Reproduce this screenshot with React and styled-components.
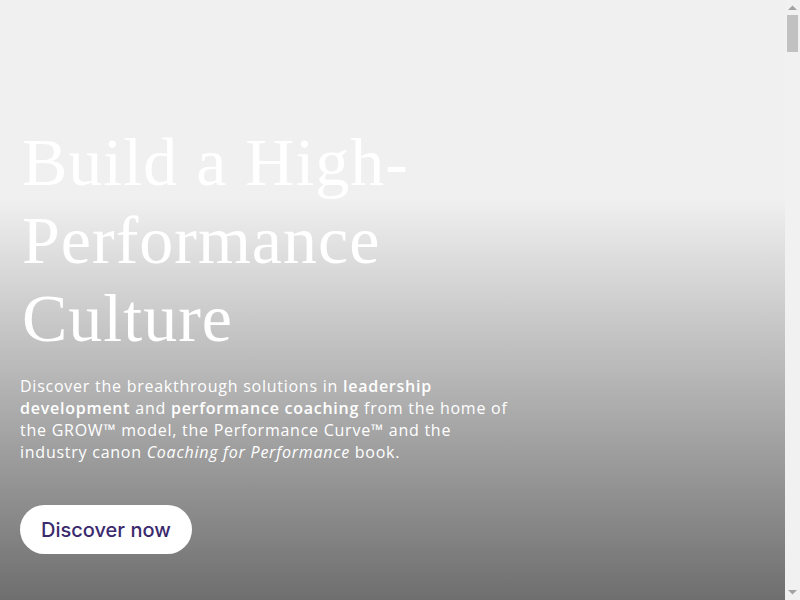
import React from 'react';
import styled, { createGlobalStyle } from 'styled-components';

const GlobalStyle = createGlobalStyle`
  html, body {
    margin: 0;
    padding: 0;
    background-color: #f0f0f0;
    overflow: hidden;
  }
  * {
    box-sizing: border-box;
  }
`;

const Frame = styled.div`
  display: flex;
  width: 800px;
  height: 600px;
  overflow: hidden;
`;

const Viewport = styled.div`
  flex: 1;
  height: 600px;
  overflow: hidden;
`;

const Hero = styled.section`
  height: 600px;
  background-color: #f0f0f0;
  background-image: linear-gradient(
    to bottom,
    rgba(0, 0, 0, 0) 33%,
    rgba(0, 0, 0, 0.54) 100%
  );
  display: flex;
  flex-direction: column;
  padding: 123px 20px 0;
`;

const Title = styled.h1`
  margin: 0;
  font-family: 'Liberation Serif', 'DejaVu Serif', serif;
  font-weight: 400;
  font-size: 68px;
  line-height: 78px;
  letter-spacing: 1px;
  color: #ffffff;
  max-width: 430px;
  padding-left: 2px;
`;

const Lead = styled.p`
  margin: 18px 0 0;
  max-width: 495px;
  font-family: 'Open Sans', 'Liberation Sans', sans-serif;
  font-size: 16px;
  line-height: 22px;
  letter-spacing: 0.75px;
  color: #ffffff;

  strong {
    font-weight: 600;
  }
`;

const CtaButton = styled.button`
  align-self: flex-start;
  margin-top: 42px;
  height: 49px;
  padding: 0 21px;
  border: none;
  border-radius: 25px;
  background: #ffffff;
  color: #3b2a6d;
  font-family: 'Inter', 'Liberation Sans', sans-serif;
  font-size: 20px;
  font-weight: 500;
  cursor: pointer;
`;

/* drawn scrollbar, the page below the hero is long */
const ScrollTrack = styled.div`
  width: 15px;
  height: 600px;
  background: #f1f1f1;
  display: flex;
  flex-direction: column;
  align-items: center;
`;

const Arrow = styled.div`
  height: 15px;
  width: 15px;
  display: flex;
  align-items: center;
  justify-content: center;
`;

const Thumb = styled.div`
  width: 11px;
  height: 37px;
  margin-left: 2px;
  align-self: flex-start;
  background: #c1c1c1;
`;

const Gap = styled.div`
  flex: 1;
`;

function ArrowGlyph({ down }) {
  return (
    <svg width="9" height="5" viewBox="0 0 9 5">
      <polygon
        points={down ? '0,0 9,0 4.5,4.5' : '0,5 9,5 4.5,0.5'}
        fill="#a3a3a3"
      />
    </svg>
  );
}

export default function App() {
  return (
    <>
      <GlobalStyle />
      <Frame>
        <Viewport>
          <Hero>
            <Title>Build a High-Performance Culture</Title>
            <Lead>
              Discover the breakthrough solutions in <strong>leadership development</strong> and{' '}
              <strong>performance coaching</strong> from the home of the GROW™ model, the
              Performance Curve™ and the industry canon <em>Coaching for Performance</em> book.
            </Lead>
            <CtaButton>Discover now</CtaButton>
          </Hero>
        </Viewport>
        <ScrollTrack>
          <Arrow>
            <ArrowGlyph />
          </Arrow>
          <Thumb />
          <Gap />
          <Arrow>
            <ArrowGlyph down />
          </Arrow>
        </ScrollTrack>
      </Frame>
    </>
  );
}
